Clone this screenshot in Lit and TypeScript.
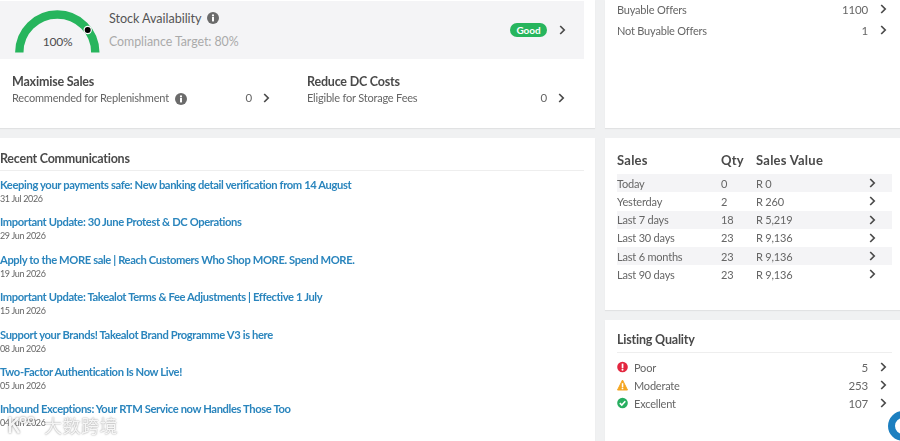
import { LitElement, html, css, svg } from "lit";
import { customElement } from "lit/decorators.js";

const chevron = html`<svg class="chev" viewBox="0 0 7 10" width="7" height="10"><path d="M1.2 1 L5.2 5 L1.2 9" fill="none" stroke="#4a4a4a" stroke-width="1.7"/></svg>`;

const info = html`<svg class="info" viewBox="0 0 12 12" width="12" height="12">
  <circle cx="6" cy="6" r="6" fill="#6b6b6b"/>
  <rect x="5" y="5" width="2" height="4.4" fill="#fff"/>
  <circle cx="6" cy="3.4" r="1.1" fill="#fff"/>
</svg>`;

const qualityIcons = {
  poor: svg`<circle cx="5.5" cy="6" r="5.3" fill="#e3263f"/><rect x="4.7" y="2.6" width="1.7" height="4.6" fill="#fff"/><circle cx="5.5" cy="8.8" r="1" fill="#fff"/>`,
  moderate: svg`<path d="M5.5 1 L10.5 11 L0.5 11 Z" fill="#f5a623" stroke="#f5a623" stroke-linejoin="round"/><rect x="4.8" y="4.2" width="1.5" height="3.8" fill="#fff"/><circle cx="5.5" cy="9.4" r=".9" fill="#fff"/>`,
  excellent: svg`<circle cx="5.5" cy="6" r="5.3" fill="#27ae60"/><path d="M2.8 6.1 L4.8 8.1 L8.3 4.3" fill="none" stroke="#fff" stroke-width="1.6"/>`,
};

const offers = [
  { label: "Buyable Offers", value: "1100" },
  { label: "Not Buyable Offers", value: "1" },
];

const news = [
  { title: "Keeping your payments safe: New banking detail verification from 14 August", date: "31 Jul 2026" },
  { title: "Important Update: 30 June Protest & DC Operations", date: "29 Jun 2026" },
  { title: "Apply to the MORE sale | Reach Customers Who Shop MORE. Spend MORE.", date: "19 Jun 2026" },
  { title: "Important Update: Takealot Terms & Fee Adjustments | Effective 1 July", date: "15 Jun 2026" },
  { title: "Support your Brands! Takealot Brand Programme V3 is here", date: "08 Jun 2026" },
  { title: "Two-Factor Authentication Is Now Live!", date: "05 Jun 2026" },
  { title: "Inbound Exceptions: Your RTM Service now Handles Those Too", date: "04 Jun 2026" },
];

const sales = [
  ["Today", "0", "R 0"],
  ["Yesterday", "2", "R 260"],
  ["Last 7 days", "18", "R 5,219"],
  ["Last 30 days", "23", "R 9,136"],
  ["Last 6 months", "23", "R 9,136"],
  ["Last 90 days", "23", "R 9,136"],
];

const quality = [
  { icon: qualityIcons.poor, label: "Poor", value: "5" },
  { icon: qualityIcons.moderate, label: "Moderate", value: "253" },
  { icon: qualityIcons.excellent, label: "Excellent", value: "107" },
];

@customElement("app-root")
export class AppRoot extends LitElement {
  static styles = css`
    :host {
      display: block;
      position: relative;
      width: 900px;
      height: 441px;
      overflow: hidden;
      background: #f0f1f2;
      font-family: Lato, "Liberation Sans", sans-serif;
      color: #666;
      font-size: 11px;
      letter-spacing: -0.2px;
    }
    .page {
      display: grid;
      grid-template-columns: 595px 295px;
      grid-template-rows: 128px 172px 200px;
      column-gap: 10px;
      row-gap: 10px;
      filter: blur(0.35px);
    }
    .card {
      background: #fff;
      box-shadow: 0 1px 1px rgba(0, 0, 0, 0.06);
    }
    .chev { display: block; flex: none; }
    .info { display: block; flex: none; }

    /* stock card */
    .stock { padding: 1px 11px 0 0; }
    .band {
      height: 58px;
      background: #f4f4f6;
      display: flex;
      align-items: center;
      padding-left: 15px;
      padding-right: 18px;
    }
    .gauge { position: relative; width: 85px; height: 58px; flex: none; }
    .gauge svg { display: block; }
    .gauge span {
      position: absolute;
      left: 0;
      right: 0;
      top: 33px;
      text-align: center;
      font-size: 12px;
      color: #4d4d4d;
    }
    .band-text { margin-left: 9px; flex: 1; align-self: flex-start; }
    .band-title {
      display: flex;
      align-items: center;
      gap: 6px;
      font-size: 12.6px;
      letter-spacing: -0.05px;
      color: #555;
      height: 18px;
      margin-top: 8px;
    }
    .band-sub { font-size: 12.4px; letter-spacing: -0.05px; color: #aaa; margin-top: 7px; line-height: 16px; }
    .pill {
      background: #27b55d;
      color: #fff;
      font-size: 10px;
      letter-spacing: -0.1px;
      font-weight: 700;
      line-height: 14px;
      width: 37px;
      text-align: center;
      border-radius: 7px;
      margin-right: 12px;
    }
    .metrics {
      display: grid;
      grid-template-columns: 295px 1fr;
      padding: 14px 0 0 12px;
    }
    .metric h3 {
      margin: 0;
      font-size: 12.5px;
      letter-spacing: -0.2px;
      line-height: 18px;
      font-weight: 700;
      color: #4a4a4a;
    }
    .metric-row { display: flex; align-items: center; height: 17px; margin-top: -2px; }
    .metric-row .info { margin-left: 6px; margin-top: 2px; }
    .metric-row .num { margin-left: auto; font-size: 11.5px; }
    .metric-row .chev { margin: 0 19px 0 11px; }
    .metric:first-child .chev { margin-right: 37px; }

    /* label + value + chevron rows */
    .line {
      display: flex;
      align-items: center;
      padding: 0 13px 0 12px;
    }
    .offers { padding-top: 0; overflow: hidden; }
    .offers .line { height: 21px; margin-top: -1.5px; }
    .offers .line + .line { margin-top: 0; }
    .line .num { margin-left: auto; margin-right: 12px; font-size: 11.5px; }

    /* communications */
    .news { grid-row: span 2; padding-right: 11px; }
    .news h2 {
      margin: 0;
      padding-top: 12.5px;
      height: 33px;
      box-sizing: border-box;
      border-bottom: 1px solid #eee;
      font-size: 12.5px;
      letter-spacing: -0.25px;
      line-height: 16px;
      font-weight: 700;
      color: #4a4a4a;
    }
    .news ul { list-style: none; margin: 0; padding: 6px 0 0; }
    .news li { height: 37.4px; }
    .news a {
      display: block;
      color: #2a85bd;
      font-size: 11.2px;
      letter-spacing: -0.38px;
      font-weight: 700;
      line-height: 15px;
      text-decoration: none;
    }
    .news time { display: block; font-size: 9px; letter-spacing: -0.35px; line-height: 13px; color: #666; }

    /* sales */
    .sales { padding: 8px 8px 0 12px; }
    .sales-grid {
      display: grid;
      grid-template-columns: 104px 35px 1fr 23px;
      align-items: center;
    }
    .sales-head { font-size: 13px; font-weight: 700; color: #4a4a4a; height: 28px; letter-spacing: 0.25px; }
    .sales-row { height: 18.25px; }
    .sales-row.odd { background: #f4f4f6; }

    /* listing quality */
    .listing h2 {
      margin: 0 8px 5px 12px;
      padding-top: 12px;
      height: 33px;
      box-sizing: border-box;
      border-bottom: 1px solid #eee;
      font-size: 12.5px;
      letter-spacing: -0.2px;
      line-height: 16px;
      font-weight: 700;
      color: #4a4a4a;
    }
    .listing .line { height: 18.1px; }
    .listing .q { margin-right: 6px; flex: none; display: block; }

    /* overlays */
    .chat {
      position: absolute;
      left: 888px;
      top: 411px;
      width: 30px;
      height: 30px;
      box-sizing: border-box;
      border: 7px solid #1c7fc0;
      border-radius: 50%;
    }
    .mark {
      position: absolute;
      left: 8px;
      top: 415px;
      display: flex;
      align-items: center;
      gap: 6px;
      color: rgba(255, 255, 255, 0.9);
      font-family: "Noto Sans CJK SC", sans-serif;
      font-size: 18px;
      line-height: 20px;
      text-shadow: 0 0 1.5px rgba(90, 90, 90, 0.8);
      letter-spacing: 0.5px;
    }
    .mark svg { filter: drop-shadow(0 0 1px rgba(90, 90, 90, 0.8)); }
  `;

  render() {
    return html`
      <div class="page">
        <section class="card stock">
          <div class="band">
            <div class="gauge">
              <svg viewBox="0 0 85 58" width="85" height="58">
                <path d="M4.3 51.5 A38 38 0 0 1 80.3 51.5" fill="none" stroke="#27b55d" stroke-width="8.4"/>
                <circle cx="72.7" cy="29" r="4.2" fill="#fff"/>
                <circle cx="72.7" cy="29" r="3" fill="#000"/>
              </svg>
              <span>100%</span>
            </div>
            <div class="band-text">
              <div class="band-title">Stock Availability ${info}</div>
              <div class="band-sub">Compliance Target: 80%</div>
            </div>
            <span class="pill">Good</span>
            ${chevron}
          </div>
          <div class="metrics">
            <div class="metric">
              <h3>Maximise Sales</h3>
              <div class="metric-row">
                <span>Recommended for Replenishment</span>${info}
                <span class="num">0</span>${chevron}
              </div>
            </div>
            <div class="metric">
              <h3>Reduce DC Costs</h3>
              <div class="metric-row">
                <span>Eligible for Storage Fees</span>
                <span class="num">0</span>${chevron}
              </div>
            </div>
          </div>
        </section>

        <section class="card offers">
          ${offers.map((o) => html`<div class="line"><span>${o.label}</span><span class="num">${o.value}</span>${chevron}</div>`)}
        </section>

        <section class="card news">
          <h2>Recent Communications</h2>
          <ul>
            ${news.map((n) => html`<li><a href="#">${n.title}</a><time>${n.date}</time></li>`)}
          </ul>
        </section>

        <section class="card sales">
          <div class="sales-grid sales-head"><span>Sales</span><span>Qty</span><span>Sales Value</span><span></span></div>
          ${sales.map(
            (r, i) => html`<div class="sales-grid sales-row ${i % 2 === 0 ? "odd" : ""}">
              <span>${r[0]}</span><span>${r[1]}</span><span>${r[2]}</span>${chevron}
            </div>`,
          )}
        </section>

        <section class="card listing">
          <h2>Listing Quality</h2>
          ${quality.map(
            (q) => html`<div class="line">
              <svg class="q" viewBox="0 0 11 12" width="11" height="12">${q.icon}</svg>
              <span>${q.label}</span><span class="num">${q.value}</span>${chevron}
            </div>`,
          )}
        </section>
      </div>
      <div class="chat"></div>
      <div class="mark">
        <svg viewBox="0 0 30 20" width="30" height="20">
          <path d="M2 2 V18 M2 11 L10 3 M5 9 L11 18" fill="none" stroke="rgba(255,255,255,.9)" stroke-width="2.4"/>
          <circle cx="15" cy="5" r="2.6" fill="none" stroke="rgba(255,255,255,.9)" stroke-width="1.4"/>
          <circle cx="23" cy="5" r="2.6" fill="none" stroke="rgba(255,255,255,.9)" stroke-width="1.4"/>
        </svg>
        <span>大数跨境</span>
      </div>
    `;
  }
}
